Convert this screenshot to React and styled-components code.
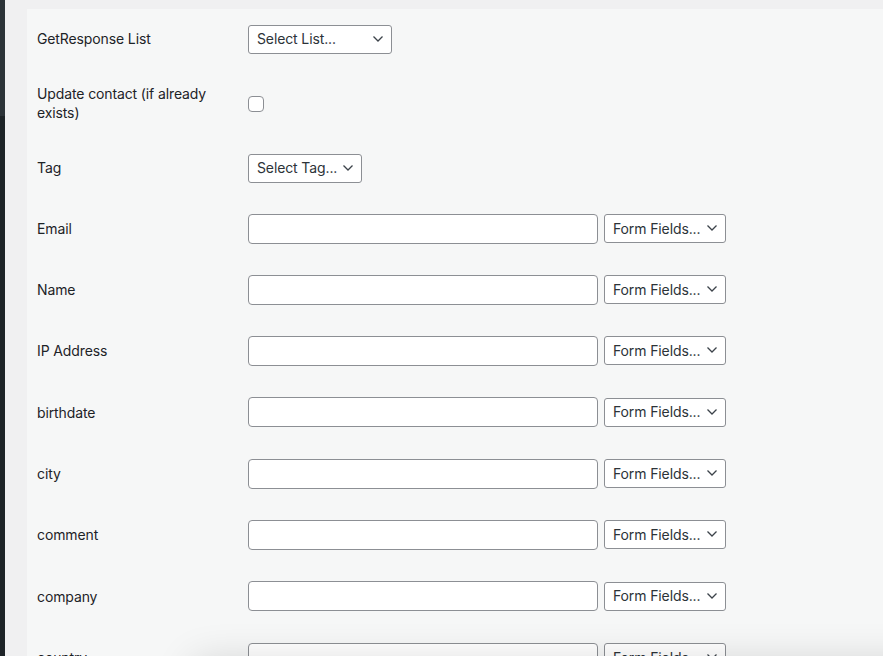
import React from 'react';
import styled, { createGlobalStyle } from 'styled-components';

const Global = createGlobalStyle`
  html, body {
    margin: 0;
    padding: 0;
    height: 100%;
    overflow: hidden;
    background: #f0f0f1;
  }
  body {
    font-family: Inter, "Noto Sans", sans-serif;
    font-size: 14px;
    letter-spacing: -0.12px;
    color: #1d2327;
  }
`;

const Screen = styled.div`
  display: flex;
  height: 656px;
  overflow: hidden;
`;

const AdminBar = styled.div`
  width: 5px;
  flex: none;
  background: linear-gradient(#2c3338 0, #2c3338 116px, #1d2327 116px);
`;

const Content = styled.div`
  flex: 1;
  padding: 9px 0 0 22px;
  background: #f0f0f1;
`;

const Panel = styled.div`
  background: #f6f7f7;
  height: 100%;
  padding: 0 10px;
`;

const Row = styled.div`
  display: flex;
  align-items: center;
  height: ${(p) => p.h}px;
`;

const Label = styled.div`
  width: 211px;
  flex: none;
  padding-right: 15px;
  padding-bottom: ${(p) => (p.$lift ? 2 : 0)}px;
  box-sizing: border-box;
  line-height: 19px;
  color: #1d2327;
`;

const Field = styled.div`
  display: flex;
  align-items: center;
  gap: 6px;
`;

const TextInput = styled.div`
  width: 350px;
  height: 30px;
  box-sizing: border-box;
  background: #fff;
  border: 1px solid #8c8f94;
  border-radius: 4px;
`;

const Select = styled.div`
  position: relative;
  width: ${(p) => p.w}px;
  height: 29px;
  box-sizing: border-box;
  border: 1px solid #8c8f94;
  border-radius: 3px;
  background: #fff;
  color: #2c3338;
  padding: 0 0 1px 8px;
  display: flex;
  align-items: center;
  white-space: nowrap;
  svg {
    position: absolute;
    right: 7px;
    top: 8px;
  }
`;

const Checkbox = styled.div`
  width: 16px;
  height: 16px;
  box-sizing: border-box;
  border: 1px solid #8c8f94;
  border-radius: 4px;
  background: #fff;
`;

const BottomShadow = styled.div`
  position: fixed;
  left: 200px;
  right: -40px;
  top: 668px;
  height: 60px;
  background: #f6f7f7;
  box-shadow: 0 0 40px 6px rgba(0, 0, 0, 0.16);
`;

const Chevron = () => (
  <svg width="12" height="10" viewBox="0 0 12 10">
    <path d="M1.5 2.5 L6 7 L10.5 2.5" fill="none" stroke="#3c434a" strokeWidth="1.3" />
  </svg>
);

const Dropdown = ({ w, children }) => (
  <Select w={w}>
    {children}
    <Chevron />
  </Select>
);

const fields = ['Email', 'Name', 'IP Address', 'birthdate', 'city', 'comment', 'company', 'country'];

export default function App() {
  return (
    <>
      <Global />
      <Screen>
        <AdminBar />
        <Content>
          <Panel>
            <Row h={60}>
              <Label $lift>GetResponse List</Label>
              <Dropdown w={144}>Select List...</Dropdown>
            </Row>
            <Row h={69}>
              <Label $lift>Update contact (if already exists)</Label>
              <Checkbox />
            </Row>
            <Row h={60}>
              <Label $lift>Tag</Label>
              <Dropdown w={114}>Select Tag...</Dropdown>
            </Row>
            {fields.map((f, i) => (
              <Row key={f} h={i === 0 ? 61 : 61.33}>
                <Label>{f}</Label>
                <Field>
                  <TextInput />
                  <Dropdown w={122}>Form Fields...</Dropdown>
                </Field>
              </Row>
            ))}
          </Panel>
        </Content>
      </Screen>
      <BottomShadow />
    </>
  );
}
